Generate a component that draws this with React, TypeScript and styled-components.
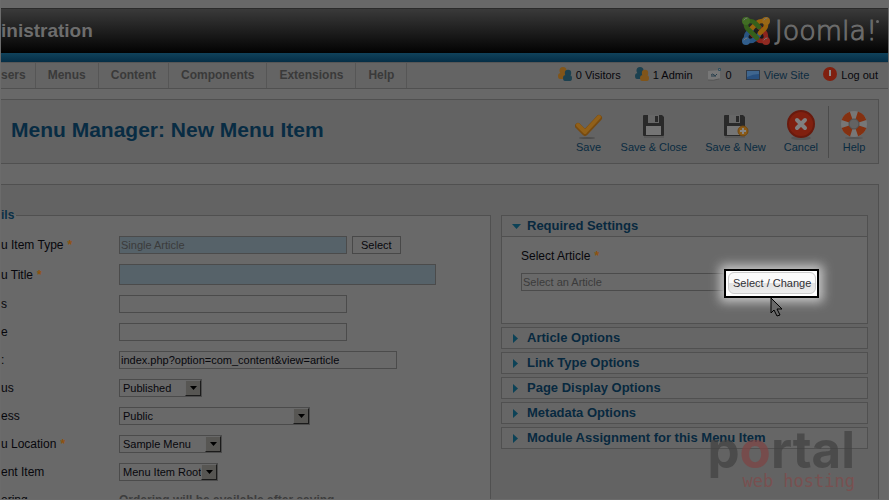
import React from "react";
import styled, { createGlobalStyle } from "styled-components";

const GlobalStyle = createGlobalStyle`
  * { box-sizing: border-box; }
  body {
    margin: 0;
    background: #696969;
    color: #07070c;
    font: 12px/16px "Liberation Sans", Arial, sans-serif;
  }
  h1, h2, p { margin: 0; }
  button, input, select { font: 11px/14px "Liberation Sans", Arial, sans-serif; color: inherit; border-radius: 0; }
  a { text-decoration: none; }
`;

const Page = styled.div`
  display: flex;
  flex-direction: column;
  height: 100vh;
  overflow: hidden;
  position: relative;
  background: #686868;
  border: 1px solid #6b6b6b;
  border-top: 0;
  padding-top: 8px;
`;

const Header = styled.header`
  display: flex;
  align-items: center;
  justify-content: space-between;
  height: 45px;
  flex: none;
  padding-right: 9px;
  background: linear-gradient(#3a3a3a, #020202);
  border-top: 1px solid #2b2b2b;
`;

const SiteTitle = styled.h1`
  font-size: 19px;
  line-height: 24px;
  color: #6d6d6d;
`;

const Brand = styled.div`
  display: flex;
  align-items: center;
  gap: 4px;
  color: #6b6b6b;
  font: 200 27px/36px "DejaVu Sans", sans-serif;
`;

const BrandName = styled.span`
  -webkit-text-stroke: 1px #6b6b6b;
`;

const BrandDot = styled.span`
  align-self: flex-start;
  width: 3px;
  height: 3px;
  margin: 7px 0 0 -5px;
  border-radius: 50%;
  background: #6b6b6b;
`;

const BlueBand = styled.div`
  height: 9px;
  flex: none;
  background: linear-gradient(#10425b, #052e46);
`;

const MenuBar = styled.div`
  display: flex;
  justify-content: space-between;
  height: 27px;
  flex: none;
  background: #646464;
  border-top: 1px solid #565656;
  border-bottom: 1px solid #505050;
`;

const Menus = styled.nav`
  display: flex;
`;

const MenuLink = styled.a`
  padding: 4px 12px 0;
  font-weight: bold;
  color: #3a3a3a;
  border-right: 1px solid #565656;
  &:first-child { padding: 4px 9px 0 0; }
`;

const Status = styled.div`
  display: flex;
  gap: 14px;
  padding: 4px 10px 0 0;
  font-size: 11px;
`;

const StatusItem = styled.a<{ $link?: boolean }>`
  display: flex;
  gap: 4px;
  color: ${(p) => (p.$link ? "#0c2b40" : "#07070c")};
`;

const Toolbar = styled.div`
  display: flex;
  align-items: center;
  justify-content: space-between;
  height: 65px;
  flex: none;
  margin: 10px 9px 0 0;
  background: #636363;
  border: 1px solid #505050;
  border-left: 0;
`;

const PageTitle = styled.h2`
  padding: 0 0 4px 10px;
  font-size: 21px;
  line-height: 26px;
  color: #082c43;
`;

const Actions = styled.div`
  display: flex;
  padding-right: 1px;
`;

const Action = styled.button`
  display: flex;
  flex-direction: column;
  align-items: center;
  padding: 4px 9px;
  border: 0;
  background: none;
  color: #0a2b41;
`;

const Divider = styled.div`
  width: 1px;
  margin: 0 2px 0 1px;
  background: #4b4b4b;
`;

const Content = styled.main`
  display: grid;
  grid-template-columns: 490fr 367fr;
  gap: 10px;
  flex: 1;
  min-height: 0;
  margin: 20px 9px 0 0;
  padding: 23px 10px 0 0;
  background: #636363;
  border: 1px solid #505050;
  border-left: 0;
  border-bottom: 0;
`;

const Details = styled.fieldset`
  min-width: 0;
  margin: 0;
  padding: 14px 0 0;
  background: #696969;
  border: 1px solid #505050;
  border-left: 0;
`;

const Legend = styled.legend`
  padding: 0 2px 0 0;
  font-size: 12px;
  line-height: 14px;
  font-weight: bold;
  color: #0b3047;
`;

const Rows = styled.div`
  display: flex;
  flex-direction: column;
  gap: 10px;
`;

const Row = styled.div<{ $tall?: boolean }>`
  display: grid;
  grid-template-columns: 118px 1fr;
  align-items: center;
  height: ${(p) => (p.$tall ? 21 : 18)}px;
`;

const Controls = styled.div`
  display: flex;
  gap: 5px;
`;

const Star = styled.span`
  padding-left: 4px;
  font-weight: bold;
  color: #8f520c;
`;

const TextBox = styled.input<{ $width: number; $tinted?: boolean; $tall?: boolean }>`
  width: ${(p) => p.$width}px;
  height: ${(p) => (p.$tall ? 21 : 18)}px;
  min-width: 0;
  padding: 0 1px;
  border: 1px solid #4b4b4b;
  background: ${(p) => (p.$tinted ? "#566269" : "#696969")};
  &:disabled { color: #3b3b3b; }
`;

const PlainButton = styled.button`
  height: 18px;
  padding: 0 8px;
  border: 1px solid #484848;
  background: #696969;
`;

const SelectWrap = styled.div<{ $width: number }>`
  position: relative;
  width: ${(p) => p.$width}px;
  height: 18px;
`;

const DropDown = styled.select`
  display: block;
  width: 100%;
  height: 18px;
  padding: 0 0 0 3px;
  appearance: none;
  border: 1px solid #4b4b4b;
  background: #696969;
`;

const DropArrow = styled.span`
  position: absolute;
  top: 1px;
  right: 1px;
  width: 16px;
  height: 16px;
  display: flex;
  align-items: center;
  justify-content: center;
  pointer-events: none;
  background: #575653;
  border: 1px solid;
  border-color: #686868 #1b1b1b #1b1b1b #686868;
`;

const Note = styled.p`
  font-weight: bold;
  color: #3d3d3d;
`;

const Panels = styled.div`
  display: flex;
  flex-direction: column;
  gap: 3px;
  padding-top: 7px;
`;

const Panel = styled.section`
  background: #666;
  border: 1px solid #505050;
`;

const PanelTitle = styled.button`
  display: flex;
  align-items: center;
  gap: 6px;
  width: 100%;
  height: 20px;
  padding: 0 0 0 10px;
  border: 0;
  background: none;
  color: #08293f;
  font-size: 13px;
  font-weight: bold;
`;

const PanelBody = styled.div`
  height: 87px;
  padding: 11px 19px 0;
  background: #696969;
  border-top: 1px solid #505050;
`;

const ArticlePicker = styled.div`
  display: flex;
  align-items: flex-start;
  padding-top: 5px;
  input { margin-top: 4px; }
`;

const Spotlight = styled.div`
  position: relative;
  flex: none;
  padding: 1px 1px 2px 2px;
  border: 2px solid #000;
  background: #fff;
  box-shadow: 0 0 10px 4px #c8c8c8;
`;

const ChangeButton = styled.button`
  display: block;
  height: 22px;
  padding: 0 4px;
  border: 1px solid #ccc;
  border-radius: 6px;
  background: linear-gradient(#fafafa 50%, #e2e2e2 50%, #ececec);
  color: #303035;
`;

const Pointer = styled.svg`
  position: absolute;
  left: 44px;
  top: 26px;
`;

const Watermark = styled.div`
  position: absolute;
  right: 33px;
  bottom: 9px;
  pointer-events: none;
  text-align: right;
  opacity: 0.72;
`;

const MarkName = styled.div`
  font: 700 51px/46px Inter, sans-serif;
  color: #424242;
  span { color: #7e4444; }
`;

const MarkTag = styled.div`
  font: 17px/17px "DejaVu Sans Mono", monospace;
  color: #814a4a;
`;

const JoomlaMark = () => (
  <svg width="30" height="30" viewBox="0 0 30 30" fill="none" strokeWidth="4.6" strokeLinecap="round" strokeLinejoin="round">
    <path d="M25 25v-4q0-4-3-6l-4-4" stroke="#8c241d" />
    <path d="M25 25h-4q-3 0-5-2l-7-7" stroke="#8c241d" />
    <path d="M5 25v-3q0-4 3-6l3-3" stroke="#295481" />
    <path d="M5 25h4q3 0 5-2l4-4" stroke="#295481" />
    <path d="M25 5h-4q-3 0-5 2l-7 7" stroke="#98620c" />
    <path d="M25 5v4q0 3-3 5l-3 3" stroke="#98620c" />
    <path d="M5 5v4q0 3 3 5l8 8" stroke="#35601b" />
    <path d="M5 5h4q3 0 5 2l4 4" stroke="#35601b" />
    <circle cx="5" cy="5" r="4" fill="#416d24" stroke="none" />
    <circle cx="25" cy="5" r="4" fill="#986817" stroke="none" />
    <circle cx="25" cy="25" r="4" fill="#912a22" stroke="none" />
    <circle cx="5" cy="25" r="4" fill="#315e8c" stroke="none" />
    <path d="M3 4q1-2 3-2M23 4q1-2 3-2M3 24q1-2 3-2M23 24q1-2 3-2" stroke="#777" strokeWidth="1" />
  </svg>
);

const People = ({ front, back }: { front: string; back: string }) => (
  <svg width="14" height="15" viewBox="0 0 14 15">
    <circle cx="5" cy="3.5" r="3.5" fill={back} />
    <path d="M0 9q0-3 3-3h4l2 6H2q-2 0-2-3z" fill={back} />
    <circle cx="10" cy="6" r="3.2" fill={front} />
    <path d="M5 11q0-3 3-3h3q3 0 3 3 0 3-2 3H7q-2 0-2-3z" fill={front} />
  </svg>
);

const MailIcon = () => (
  <svg width="15" height="15" viewBox="0 0 15 15">
    <path d="M1 4l12-1v8q-2 2-5 2H1z" fill="#777" />
    <path d="M1 13q5 1 11-1" stroke="#555" fill="none" />
    <path d="M4 8q2-2 3 0t3-1M4 9h5" stroke="#263e4c" fill="none" />
    <path d="M11.5 1.5h2v2h-2z" stroke="#31505f" fill="#777" />
  </svg>
);

const ScreenIcon = () => (
  <svg width="14" height="15" viewBox="0 0 14 15">
    <rect x=".5" y="3.5" width="13" height="9" fill="#28507f" stroke="#303a47" />
    <path d="M1 4h12v3Q7 7 1 10z" fill="#3f668f" />
  </svg>
);

const PowerIcon = () => (
  <svg width="14" height="14" viewBox="0 0 14 14">
    <circle cx="7" cy="7" r="7" fill="#80200f" />
    <path d="M7 3v6" stroke="#8c8c8c" strokeWidth="2" />
  </svg>
);

const SaveIcon = () => (
  <svg width="28" height="30" viewBox="0 0 28 30">
    <ellipse cx="12" cy="28" rx="8" ry="1" fill="#4d4d4d" />
    <path d="M3 16l7 7L24 8" fill="none" stroke="#774a10" strokeWidth="6" strokeLinecap="round" strokeLinejoin="round" />
    <path d="M3 15l7 7L24 7" fill="none" stroke="#916019" strokeWidth="4" strokeLinecap="round" strokeLinejoin="round" />
  </svg>
);

const DiskIcon = ({ plus }: { plus?: boolean }) => (
  <svg width="28" height="30" viewBox="0 0 28 30">
    <path d="M3 6q0-1 1-1h18l2 2v18q0 1-1 1H4q-1 0-1-1z" fill="#292929" />
    <path d="M8 5h11v8H8z" fill="#676767" />
    <path d="M15 6h3v6h-3z" fill="#292929" />
    <path d="M6 16h15v9H6z" fill="#757575" />
    <path d="M4 27h20" stroke="#505050" />
    {plus && (
      <>
        <circle cx="22" cy="21" r="5" fill="#8a5a17" stroke="#704711" />
        <path d="M22 18v6M19 21h6" stroke="#858585" strokeWidth="2" />
      </>
    )}
  </svg>
);

const CancelIcon = () => (
  <svg width="28" height="30" viewBox="0 0 28 30">
    <ellipse cx="14" cy="28" rx="10" ry="2" fill="#555" />
    <circle cx="14" cy="14" r="13" fill="#80200f" stroke="#691a0d" strokeWidth="2" />
    <path d="M10 10l8 8m0-8l-8 8" stroke="#808080" strokeWidth="4" strokeLinecap="round" />
  </svg>
);

const HelpIcon = () => (
  <svg width="28" height="30" viewBox="0 0 28 30" fill="none">
    <ellipse cx="14" cy="28" rx="9" ry="1" fill="#555" />
    <circle cx="14" cy="14" r="9" stroke="#777" strokeWidth="8" />
    <circle cx="14" cy="14" r="9" stroke="#843111" strokeWidth="8" pathLength="8" strokeDasharray="1.2 .8" strokeDashoffset=".1" transform="rotate(22 14 14)" />
    <circle cx="14" cy="14" r="5" stroke="#505050" />
  </svg>
);

const Triangle = ({ open }: { open?: boolean }) => (
  <svg width="9" height="9" viewBox="0 0 9 9">
    <path d={open ? "M0 2h9L4.5 7z" : "M1 0l5 4.5L1 9z"} fill="#0c4257" />
  </svg>
);

const Choice = ({ id, value, width }: { id: string; value: string; width: number }) => (
  <SelectWrap $width={width}>
    <DropDown id={id} defaultValue={value}>
      <option>{value}</option>
    </DropDown>
    <DropArrow>
      <svg width="7" height="4" viewBox="0 0 7 4"><path d="M0 0h7L3.5 4z" fill="#000" /></svg>
    </DropArrow>
  </SelectWrap>
);

const menus = ["sers", "Menus", "Content", "Components", "Extensions", "Help"];
const closedPanels = ["Article Options", "Link Type Options", "Page Display Options", "Metadata Options", "Module Assignment for this Menu Item"];

export default function App() {
  return (
    <>
      <GlobalStyle />
      <Page>
        <Header>
          <SiteTitle>inistration</SiteTitle>
          <Brand><JoomlaMark /><BrandName>Joomla!</BrandName><BrandDot /></Brand>
        </Header>
        <BlueBand />
        <MenuBar>
          <Menus>{menus.map((m) => <MenuLink key={m} href="#">{m}</MenuLink>)}</Menus>
          <Status>
            <StatusItem as="span"><People back="#80551a" front="#1c4150" />0 Visitors</StatusItem>
            <StatusItem as="span"><People back="#1c4150" front="#80551a" />1 Admin</StatusItem>
            <StatusItem href="#"><MailIcon />0</StatusItem>
            <StatusItem href="#" $link><ScreenIcon />View Site</StatusItem>
            <StatusItem href="#"><PowerIcon />Log out</StatusItem>
          </Status>
        </MenuBar>
        <Toolbar>
          <PageTitle>Menu Manager: New Menu Item</PageTitle>
          <Actions>
            <Action><SaveIcon />Save</Action>
            <Action><DiskIcon />Save &amp; Close</Action>
            <Action><DiskIcon plus />Save &amp; New</Action>
            <Action><CancelIcon />Cancel</Action>
            <Divider />
            <Action><HelpIcon />Help</Action>
          </Actions>
        </Toolbar>
        <Content>
          <Details>
            <Legend>ils</Legend>
            <Rows>
              <Row>
                <label htmlFor="type">u Item Type<Star>*</Star></label>
                <Controls>
                  <TextBox id="type" $width={228} $tinted disabled defaultValue="Single Article" />
                  <PlainButton>Select</PlainButton>
                </Controls>
              </Row>
              <Row $tall>
                <label htmlFor="title">u Title<Star>*</Star></label>
                <TextBox id="title" $width={317} $tinted $tall />
              </Row>
              <Row><label htmlFor="alias">s</label><TextBox id="alias" $width={228} /></Row>
              <Row><label htmlFor="note">e</label><TextBox id="note" $width={228} /></Row>
              <Row>
                <label htmlFor="link">:</label>
                <TextBox id="link" $width={278} readOnly value="index.php?option=com_content&view=article" />
              </Row>
              <Row><label htmlFor="status">us</label><Choice id="status" value="Published" width={83} /></Row>
              <Row><label htmlFor="access">ess</label><Choice id="access" value="Public" width={191} /></Row>
              <Row>
                <label htmlFor="location">u Location<Star>*</Star></label>
                <Choice id="location" value="Sample Menu" width={103} />
              </Row>
              <Row><label htmlFor="parent">ent Item</label><Choice id="parent" value="Menu Item Root" width={99} /></Row>
              <Row><span>ering</span><Note>Ordering will be available after saving</Note></Row>
            </Rows>
          </Details>
          <Panels>
            <Panel>
              <PanelTitle aria-expanded="true"><Triangle open />Required Settings</PanelTitle>
              <PanelBody>
                <label htmlFor="article">Select Article<Star>*</Star></label>
                <ArticlePicker>
                  <TextBox id="article" $width={203} disabled defaultValue="Select an Article" />
                  <Spotlight>
                    <ChangeButton>Select / Change</ChangeButton>
                    <Pointer width="13" height="20" viewBox="0 0 13 20">
                      <path d="M1 1v15l3-3 3 6 3-1-3-6h5z" fill="#696969" stroke="#000" />
                    </Pointer>
                  </Spotlight>
                </ArticlePicker>
              </PanelBody>
            </Panel>
            {closedPanels.map((t) => (
              <Panel key={t}><PanelTitle aria-expanded="false"><Triangle />{t}</PanelTitle></Panel>
            ))}
          </Panels>
        </Content>
        <Watermark>
          <MarkName>p<span>o</span>rtal</MarkName>
          <MarkTag>web hosting</MarkTag>
        </Watermark>
      </Page>
    </>
  );
}
